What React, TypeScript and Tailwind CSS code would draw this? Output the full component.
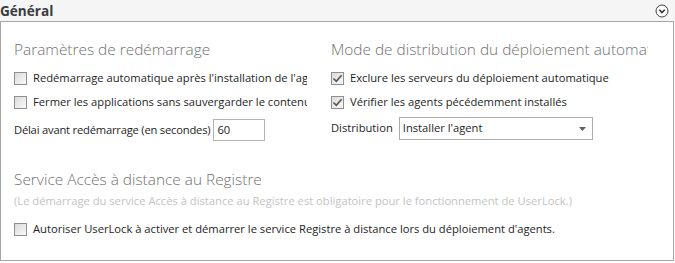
const Check = ({ checked }: { checked?: boolean }) => (
  <span className="w-[13px] h-[13px] shrink-0 border border-[#8e8f8f] bg-gradient-to-br from-[#dcdcdc] to-[#f8f8f8] flex items-center justify-center">
    {checked && (
      <svg width="11" height="11" viewBox="0 0 11 11">
        <path d="M1.5 5.5 L4.3 8.3 L9.6 2.2" fill="none" stroke="#555" strokeWidth="1.6" />
      </svg>
    )}
  </span>
);

const CheckRow = ({ label, checked }: { label: string; checked?: boolean }) => (
  <div className="h-[24px] flex items-center gap-[6px] whitespace-nowrap overflow-hidden">
    <Check checked={checked} />
    <span>{label}</span>
  </div>
);

export default function App() {
  return (
    <div className="w-[675px] h-[263px] bg-white text-[#1e1e1e] text-[11.2px] font-['Open_Sans',sans-serif] overflow-hidden">
      <div className="h-[21px] bg-[#f5f5f5] flex items-center justify-between pr-[6px]">
        <span className="text-[13.6px] font-bold text-[#3c3c3c] leading-none">Général</span>
        <svg width="14" height="14" viewBox="0 0 14 14">
          <circle cx="7" cy="7" r="6" fill="white" stroke="#444" strokeWidth="1" />
          <path d="M4.3 5.8 L7 8.5 L9.7 5.8" fill="none" stroke="#333" strokeWidth="1.6" />
        </svg>
      </div>
      <div className="w-[674px] h-[240px] border border-[#a6a6a6] pl-[13px]">
        <div className="flex">
          <div className="w-[293px] overflow-hidden">
            <div className="mt-[18px] h-[20px] flex items-center text-[15.4px] font-light text-[#707070] whitespace-nowrap">
              Paramètres de redémarrage
            </div>
            <div className="mt-[6px]">
              <CheckRow label="Redémarrage automatique après l'installation de l'agent" />
              <CheckRow label="Fermer les applications sans sauvergarder le contenu" />
            </div>
            <div className="mt-[5px] h-[22px] flex items-center gap-[3px] whitespace-nowrap">
              <span className="tracking-[-0.2px]">Délai avant redémarrage (en secondes)</span>
              <div className="w-[52px] h-[22px] border border-[#b4b4b4] flex items-center pl-[3px]">60</div>
            </div>
          </div>
          <div className="w-[317px] ml-[24px] overflow-hidden">
            <div className="mt-[18px] h-[20px] flex items-center text-[15.4px] font-light text-[#707070] whitespace-nowrap">
              Mode de distribution du déploiement automatique
            </div>
            <div className="mt-[6px]">
              <CheckRow label="Exclure les serveurs du déploiement automatique" checked />
              <CheckRow label="Vérifier les agents pécédemment installés" checked />
            </div>
            <div className="mt-[3px] h-[23px] flex items-center gap-[6px] whitespace-nowrap">
              <span>Distribution</span>
              <div className="w-[194px] h-[23px] border border-[#acacac] flex items-center justify-between pl-[3px] pr-[6px]">
                <span>Installer l'agent</span>
                <svg width="7" height="4" viewBox="0 0 7 4">
                  <path d="M0 0 L7 0 L3.5 4 Z" fill="#606060" />
                </svg>
              </div>
            </div>
          </div>
        </div>
        <div className="mt-[29px] h-[20px] flex items-center text-[15.4px] font-light text-[#707070] whitespace-nowrap">
          Service Accès à distance au Registre
        </div>
        <div className="mt-[3px] h-[16px] flex items-center text-[#c3c3c3] whitespace-nowrap">
          (Le démarrage du service Accès à distance au Registre est obligatoire pour le fonctionnement de UserLock.)
        </div>
        <div className="mt-[8px]">
          <CheckRow label="Autoriser UserLock à activer et démarrer le service Registre à distance lors du déploiement d'agents." />
        </div>
      </div>
    </div>
  );
}
